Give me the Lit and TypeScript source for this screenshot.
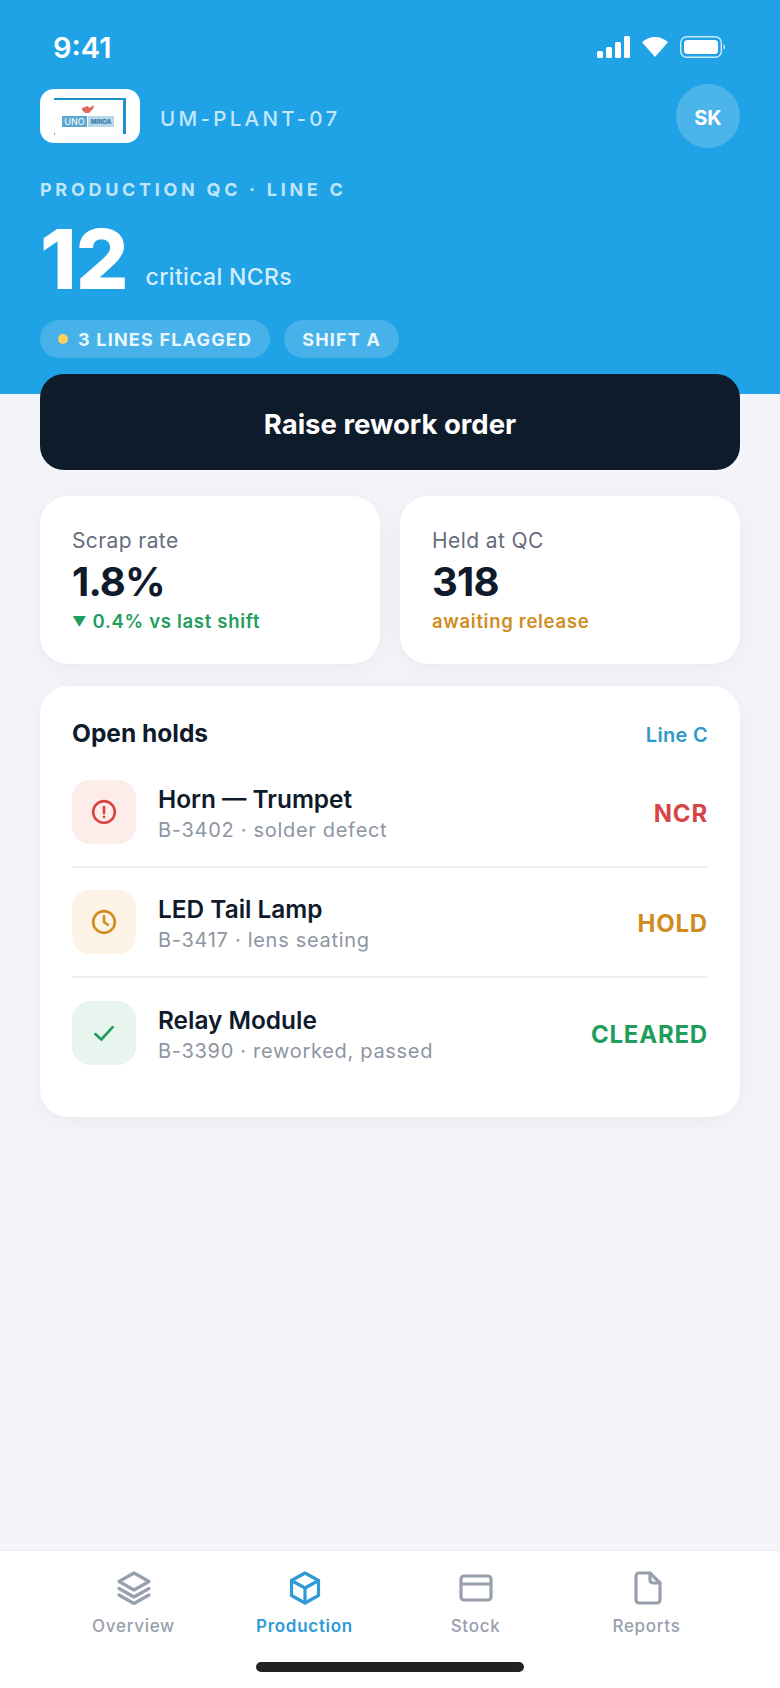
import { LitElement, html, css, svg } from "lit";
import { customElement } from "lit/decorators.js";

const holds = [
  { icon: "alert", name: "Horn — Trumpet", sub: "B-3402 · solder defect", status: "NCR" },
  { icon: "clock", name: "LED Tail Lamp", sub: "B-3417 · lens seating", status: "HOLD" },
  { icon: "check", name: "Relay Module", sub: "B-3390 · reworked, passed", status: "CLEARED" },
];

const tabs = [
  { icon: "layers", label: "Overview" },
  { icon: "box", label: "Production", active: true },
  { icon: "card", label: "Stock" },
  { icon: "file", label: "Reports" },
];

const holdIcons: Record<string, unknown> = {
  alert: svg`<circle cx="12" cy="12" r="10"/><path d="M12 7.5v5.5"/><path d="M12 16.5v.2"/>`,
  clock: svg`<circle cx="12" cy="12" r="10"/><path d="M12 6.5V12l3.5 2.5"/>`,
  check: svg`<path d="M4 13l5.5 5L20 6.5"/>`,
};

const tabIcons: Record<string, unknown> = {
  layers: svg`<path d="M18 3L33 11.5 18 20 3 11.5z"/><path d="M3 18.5L18 27l15-8.500"/><path d="M3 25l15 8.500L33 25"/>`,
  box: svg`<path d="M18 3l13.500 7.500v15L18 33 4.500 25.500v-15z"/><path d="M4.500 10.500L18 18l13.500-7.500"/><path d="M18 18v15"/>`,
  card: svg`<rect x="3" y="6" width="30" height="24" rx="3"/><path d="M3 14h30"/>`,
  file: svg`<path d="M10 3h11l10 10v17a3 3 0 0 1-3 3H10a3 3 0 0 1-3-3V6a3 3 0 0 1 3-3z"/><path d="M21 3v7a3 3 0 0 0 3 3h7"/>`,
};

@customElement("app-root")
export class AppRoot extends LitElement {
  static styles = css`
    :host {
      display: flex;
      flex-direction: column;
      width: 780px;
      min-height: 1688px;
      background: #f3f5fa;
      font-family: Inter, "Liberation Sans", sans-serif;
      color: #0f1a2b;
    }

    .hero {
      height: 394px;
      box-sizing: border-box;
      background: #1fa2e6;
      padding: 30px 40px 0;
      color: #fff;
    }

    .status {
      display: flex;
      align-items: center;
      justify-content: space-between;
      height: 34px;
      padding: 0 15px 0 13px;
    }
    .time {
      font-size: 29px;
      font-weight: 600;
      line-height: 34px;
      padding-top: 2px;
    }
    .status-icons {
      display: flex;
      align-items: center;
      gap: 12px;
    }
    .status-icons svg {
      display: block;
    }

    .brand {
      display: flex;
      align-items: center;
      margin-top: 20px;
      height: 64px;
    }
    .logo {
      display: block;
      width: 100px;
      height: 54px;
    }
    .plant {
      margin-left: 20px;
      padding-top: 4px;
      font-size: 20.5px;
      font-weight: 500;
      letter-spacing: 3.3px;
      color: #c4e7fb;
    }
    .avatar {
      margin-left: auto;
      width: 64px;
      height: 64px;
      box-sizing: border-box;
      padding-top: 4px;
      border-radius: 50%;
      background: rgba(255, 255, 255, 0.2);
      display: flex;
      align-items: center;
      justify-content: center;
      font-size: 20px;
      font-weight: 700;
    }

    .eyebrow {
      margin-top: 31px;
      font-size: 18px;
      line-height: 22px;
      font-weight: 700;
      letter-spacing: 3.7px;
      color: #bfe5fa;
    }
    .headline {
      display: flex;
      align-items: flex-end;
      gap: 18px;
      margin-top: 15px;
      height: 86px;
    }
    .count {
      font-size: 83px;
      line-height: 86px;
      font-weight: 800;
      letter-spacing: -1px;
    }
    .count-label {
      margin-bottom: 10px;
      font-size: 23px;
      line-height: 30px;
      font-weight: 500;
      letter-spacing: 0.35px;
      color: #d3eefc;
    }
    .pills {
      display: flex;
      gap: 14px;
      margin-top: 18px;
    }
    .pill {
      display: flex;
      align-items: center;
      gap: 10px;
      height: 38px;
      padding: 0 18px;
      border-radius: 19px;
      background: rgba(255, 255, 255, 0.18);
      font-size: 18px;
      font-weight: 700;
      letter-spacing: 1.2px;
      color: #eaf7fe;
    }
    .dot {
      width: 10px;
      height: 10px;
      border-radius: 50%;
      background: #ffcf5c;
    }

    main {
      flex: 1;
      display: flex;
      flex-direction: column;
      padding: 0 40px;
    }
    .cta {
      display: flex;
      align-items: center;
      justify-content: center;
      height: 96px;
      box-sizing: border-box;
      padding-top: 3px;
      margin-top: -20px;
      border-radius: 24px;
      background: #0d1b2a;
      color: #fff;
      font-size: 27.5px;
      font-weight: 700;
    }

    .stats {
      display: grid;
      grid-template-columns: 1fr 1fr;
      gap: 20px;
      margin-top: 26px;
    }
    .stat,
    .holds {
      background: #fff;
      border-radius: 28px;
      box-shadow: 0 4px 24px rgba(15, 26, 43, 0.05);
    }
    .stat {
      height: 168px;
      box-sizing: border-box;
      padding: 33px 32px 0;
    }
    .stat-label {
      font-size: 21px;
      line-height: 24px;
      letter-spacing: 0.4px;
      color: #666d7c;
    }
    .stat-value {
      margin-top: 4px;
      font-size: 40px;
      line-height: 50px;
      font-weight: 700;
      letter-spacing: -0.8px;
    }
    .stat-note {
      margin-top: 2px;
      font-size: 18.5px;
      line-height: 24px;
      font-weight: 600;
      letter-spacing: 0.7px;
    }
    .arrow {
      font-size: 14px;
      vertical-align: 1px;
    }
    .good {
      color: #1f9d5c;
    }
    .warn {
      color: #d08c1e;
    }
    .bad {
      color: #d64545;
    }

    .holds {
      margin-top: 22px;
      height: 431px;
      box-sizing: border-box;
      padding: 30px 32px 0;
    }
    .holds-head {
      display: flex;
      align-items: center;
      justify-content: space-between;
      height: 32px;
      margin-bottom: 10px;
    }
    .holds-title {
      font-size: 24.5px;
      font-weight: 700;
      padding-top: 2px;
    }
    .holds-filter {
      font-size: 20px;
      font-weight: 600;
      letter-spacing: 0.3px;
      padding-top: 6px;
      color: #2f9ac9;
    }
    .row {
      display: flex;
      align-items: center;
      gap: 22px;
      height: 110px;
      box-sizing: border-box;
      border-bottom: 2px solid #eef0f4;
    }
    .row:last-child {
      border-bottom: none;
    }
    .row-icon {
      flex: none;
      width: 64px;
      height: 64px;
      border-radius: 18px;
      display: flex;
      align-items: center;
      justify-content: center;
    }
    .row-icon svg {
      width: 26px;
      height: 26px;
      fill: none;
      stroke: currentColor;
      stroke-width: 2.4;
      stroke-linecap: round;
      stroke-linejoin: round;
    }
    .row-icon.bad {
      background: #fdecea;
    }
    .row-icon.warn {
      background: #fdf3e6;
    }
    .row-icon.good {
      background: #e8f5ef;
    }
    .row-text {
      flex: 1;
      padding-top: 3px;
    }
    .row-name {
      font-size: 24.4px;
      line-height: 30px;
      font-weight: 600;
    }
    .row-sub {
      margin-top: 3px;
      font-size: 20px;
      line-height: 26px;
      letter-spacing: 0.7px;
      color: #8e95a3;
    }
    .row-status {
      padding-top: 2px;
      font-size: 24px;
      font-weight: 700;
      letter-spacing: 0.8px;
    }

    nav {
      position: relative;
      display: grid;
      grid-template-columns: repeat(4, 1fr);
      height: 138px;
      box-sizing: border-box;
      padding: 19px 48px 0;
      background: #fff;
      border-top: 1px solid #eceef2;
    }
    .tab {
      display: flex;
      flex-direction: column;
      align-items: center;
      gap: 9px;
      font-size: 17px;
      line-height: 22px;
      font-weight: 500;
      letter-spacing: 0.7px;
      color: #98a0ae;
    }
    .tab.active {
      font-weight: 600;
      color: #2f9ad6;
    }
    .tab svg {
      width: 36px;
      height: 36px;
      fill: none;
      stroke: currentColor;
      stroke-width: 3.2;
      stroke-linecap: round;
      stroke-linejoin: round;
    }
    .home-bar {
      position: absolute;
      left: 256px;
      bottom: 16px;
      width: 268px;
      height: 10px;
      border-radius: 5px;
      background: #222;
    }
  `;

  private statusIcons() {
    return html`<div class="status-icons">
      <svg width="33" height="22" viewBox="0 0 33 22" fill="#fff">
        <rect x="0" y="15" width="6" height="7" rx="1.500"/>
        <rect x="9" y="11" width="6" height="11" rx="1.500"/>
        <rect x="18" y="6" width="6" height="16" rx="1.500"/>
        <rect x="27" y="0" width="6" height="22" rx="1.500"/>
      </svg>
      <svg width="26" height="20" viewBox="0 0 26 20" fill="#fff">
        <path d="M13 0C8 0 3.600 2 0 5.200L13 20 26 5.200C22.400 2 18 0 13 0z"/>
      </svg>
      <svg width="45" height="22" viewBox="0 0 45 22">
        <rect x="0.700" y="0.700" width="40.600" height="20.600" rx="6" fill="none" stroke="#cdeafb" stroke-width="1.400"/>
        <rect x="4" y="4" width="34" height="14" rx="3.500" fill="#fff"/>
        <path d="M43.500 8v6c.9-.4 1.500-1.600 1.500-3s-.6-2.600-1.500-3z" fill="#cdeafb"/>
      </svg>
    </div>`;
  }

  private logo() {
    return html`<svg class="logo" viewBox="0 0 100 54">
      <rect width="100" height="54" rx="14" fill="#fff"/>
      <path d="M14 9h72v36h-3V11H14z" fill="#1d93c9"/>
      <rect x="14" y="44" width="1" height="1.500" fill="#1d93c9"/>
      <path d="M42 19l6-2 1 2 5-3-1 4-4 4h-4l-3-3z" fill="#e2685f"/>
      <rect x="22" y="27" width="25" height="11" fill="#5aa8d0"/>
      <rect x="48" y="27" width="26" height="11" fill="#b5d9ea"/>
      <text x="34.500" y="36" text-anchor="middle" font-size="9" fill="#fff">UNO</text>
      <text x="61" y="35" text-anchor="middle" font-size="6" font-weight="800" fill="#3a7ca5">MINDA</text>
    </svg>`;
  }

  render() {
    return html`
      <section class="hero">
        <div class="status">
          <span class="time">9:41</span>
          ${this.statusIcons()}
        </div>
        <div class="brand">
          ${this.logo()}
          <span class="plant">UM-PLANT-07</span>
          <span class="avatar">SK</span>
        </div>
        <div class="eyebrow">PRODUCTION QC · LINE C</div>
        <div class="headline">
          <span class="count">12</span>
          <span class="count-label">critical NCRs</span>
        </div>
        <div class="pills">
          <span class="pill"><span class="dot"></span>3 LINES FLAGGED</span>
          <span class="pill">SHIFT A</span>
        </div>
      </section>

      <main>
        <div class="cta">Raise rework order</div>

        <div class="stats">
          <div class="stat">
            <div class="stat-label">Scrap rate</div>
            <div class="stat-value">1.8%</div>
            <div class="stat-note good"><span class="arrow">▼</span> 0.4% vs last shift</div>
          </div>
          <div class="stat">
            <div class="stat-label">Held at QC</div>
            <div class="stat-value">318</div>
            <div class="stat-note warn">awaiting release</div>
          </div>
        </div>

        <div class="holds">
          <div class="holds-head">
            <span class="holds-title">Open holds</span>
            <span class="holds-filter">Line C</span>
          </div>
          ${holds.map((h) => {
            const tone = h.icon === "alert" ? "bad" : h.icon === "clock" ? "warn" : "good";
            return html`<div class="row">
              <div class="row-icon ${tone}">
                <svg viewBox="0 0 24 24">${holdIcons[h.icon]}</svg>
              </div>
              <div class="row-text">
                <div class="row-name">${h.name}</div>
                <div class="row-sub">${h.sub}</div>
              </div>
              <div class="row-status ${tone}">${h.status}</div>
            </div>`;
          })}
        </div>
      </main>

      <nav>
        ${tabs.map(
          (t) => html`<div class="tab ${t.active ? "active" : ""}">
            <svg viewBox="0 0 36 36">${tabIcons[t.icon]}</svg>
            <span>${t.label}</span>
          </div>`
        )}
        <div class="home-bar"></div>
      </nav>
    `;
  }
}
